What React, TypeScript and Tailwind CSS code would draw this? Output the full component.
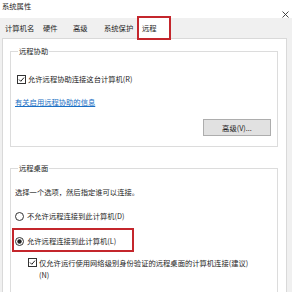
import React from "react";

const Check = () => (
  <svg width="9" height="9" viewBox="0 0 9 9" className="shrink-0">
    <rect x="0.5" y="0.5" width="8" height="8" fill="#fff" stroke="#333" />
    <path d="M2 4.5 L3.8 6.3 L7 2.6" fill="none" stroke="#222" strokeWidth="1" />
  </svg>
);

const Radio = ({ on }: { on?: boolean }) => (
  <svg width="9" height="9" viewBox="0 0 9 9" className="shrink-0">
    <circle cx="4.5" cy="4.5" r="4" fill="#fff" stroke="#333" />
    {on && <circle cx="4.5" cy="4.5" r="2.2" fill="#222" />}
  </svg>
);

export default function App() {
  return (
    <div className="w-[292px] h-[292px] overflow-hidden bg-[#f0f0f0] font-['Noto_Sans_CJK_SC','Noto_Sans',sans-serif] text-[7.3px] leading-[10px] text-[#1e1e1e]">
      <div className="h-[18px] bg-white flex justify-between items-start">
        <div className="pl-[2px] pt-[1px]">系统属性</div>
        <svg width="7" height="7" viewBox="0 0 7 7" className="mt-[11px] mr-[3px]">
          <path d="M0.5 0.5 L6.5 6.5 M6.5 0.5 L0.5 6.5" stroke="#333" strokeWidth="0.9" />
        </svg>
      </div>
      <div className="h-[20px] flex items-center pl-[5px]">
        <div className="w-[38px]">计算机名</div>
        <div className="w-[30px]">硬件</div>
        <div className="w-[31px]">高级</div>
        <div className="w-[33px]">系统保护</div>
        <div className="relative z-10 w-[34px] h-[24px] border-2 border-[#c4262c] bg-white flex items-center pl-[3px]">
          远程
        </div>
      </div>
      <div className="ml-[2px] w-[285px] h-[260px] border border-[#d9d9d9] bg-white pl-[7px] flex flex-col">
        <fieldset className="mt-[7px] w-[268px] border border-[#dcdcdc] pl-[4px] pr-[6px] pb-[10px] flex flex-col">
          <legend className="ml-[3px] px-[1px]">远程协助</legend>
          <div className="mt-[18px] ml-[2px] flex items-center gap-[2px]">
            <Check />
            <span>允许远程协助连接这台计算机(R)</span>
          </div>
          <div className="mt-[13px] text-[#1a6fc4] underline">有关启用远程协助的信息</div>
          <div className="mt-[12px] self-end w-[68px] h-[17px] bg-[#e1e1e1] border border-[#adadad] flex items-center justify-center">
            高级(V)...
          </div>
        </fieldset>
        <fieldset className="mt-[16px] w-[268px] h-[200px] border border-[#dcdcdc] pl-[4px] flex flex-col">
          <legend className="ml-[3px] px-[1px]">远程桌面</legend>
          <div className="mt-[14px]">选择一个选项，然后指定谁可以连接。</div>
          <div className="mt-[14px] flex items-center gap-[3px]">
            <Radio />
            <span>不允许远程连接到此计算机(D)</span>
          </div>
          <div className="mt-[7px] -ml-[3px] w-[122px] border-2 border-[#c4262c] pt-[6px] pb-[4px] pl-[1px]">
            <div className="flex items-center gap-[3px]">
              <Radio on />
              <span>允许远程连接到此计算机(L)</span>
            </div>
          </div>
          <div className="mt-[5px] ml-[13px] flex items-start gap-[2px] leading-[12px]">
            <div className="mt-[1px]">
              <Check />
            </div>
            <div className="whitespace-nowrap">
              <div>仅允许运行使用网络级别身份验证的远程桌面的计算机连接(建议)</div>
              <div>(N)</div>
            </div>
          </div>
        </fieldset>
      </div>
    </div>
  );
}
